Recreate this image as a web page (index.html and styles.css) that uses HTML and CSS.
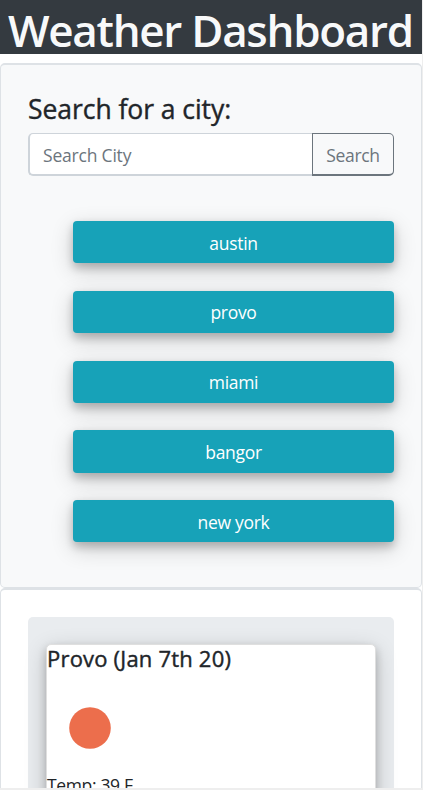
FILE: index.html
```html
<!DOCTYPE html>
<html lang="en">
<head>
<meta charset="utf-8">
<title>Weather Dashboard</title>
<link rel="stylesheet" href="styles.css">
</head>
<body>
<div class="page">
  <header class="banner"><h1>Weather Dashboard</h1></header>
  <section class="panel search">
    <h2>Search for a city:</h2>
    <form class="input-group">
      <input type="text" placeholder="Search City" aria-label="City">
      <button type="button" class="search-btn">Search</button>
    </form>
    <div class="cities">
      <button class="city">austin</button>
      <button class="city">provo</button>
      <button class="city">miami</button>
      <button class="city">bangor</button>
      <button class="city">new york</button>
    </div>
  </section>
  <section class="panel results">
    <div class="current">
      <article class="card">
        <h3>Provo (Jan 7th 20)</h3>
        <svg class="sun" width="44" height="44" viewBox="0 0 44 44" aria-hidden="true"><circle cx="22" cy="22" r="20.8" fill="#ec6e4c"/></svg>
        <p>Temp: 39 F</p>
      </article>
    </div>
  </section>
</div>
</body>
</html>
```
FILE: styles.css
```css
* { box-sizing: border-box; }
body {
  margin: 0;
  height: 790px;
  overflow: hidden;
  background: #eee;
  color: #212529;
  font-family: "Open Sans", "Noto Sans", sans-serif;
}
h1, h2, h3, p { margin: 0; white-space: nowrap; }
.page {
  width: 422px;
  height: 788px;
  overflow: hidden;
  background: #fff;
}
.banner {
  height: 54px;
  margin-bottom: 9px;
  background: #343a40;
  color: #f8f9fa;
}
.banner h1 {
  padding: 3px 0 0 8px;
  font-size: 44px;
  font-weight: 600;
  line-height: 54px;
  letter-spacing: -1.3px;
}
.panel {
  border: 1px solid #dee2e6;
  border-top-width: 2px;
  border-radius: 5px;
}
.search {
  height: 525px;
  padding: 26px 27px 0;
  background: #f8f9fa;
}
.search h2 {
  height: 42px;
  font-size: 26.5px;
  font-weight: 500;
  line-height: 37px;
  letter-spacing: -0.05px;
  -webkit-text-stroke: 0.4px currentColor;
}
.input-group { display: flex; height: 43px; }
.input-group input {
  width: 284px;
  padding: 1px 13px 0 13px;
  border: solid #ced4da;
  border-width: 1px 0 2px 2px;
  border-radius: 5px 0 0 5px;
  background: #fff;
  font: 17.5px "Open Sans", "Noto Sans", sans-serif;
  letter-spacing: -0.2px;
}
.input-group input::placeholder { color: #6c757d; opacity: 1; }
.search-btn {
  flex: 1;
  padding: 2px 0 0;
  border: solid #6c757d;
  border-width: 1px 1px 2px;
  border-radius: 0 5px 5px 0;
  background: transparent;
  color: #6c757d;
  font: 17.5px "Open Sans", "Noto Sans", sans-serif;
  letter-spacing: -0.3px;
}
.cities {
  display: flex;
  flex-direction: column;
  gap: 27.5px;
  padding: 45px 0 0 45px;
}
.city {
  height: 42.3px;
  padding: 1px 0 0;
  border: 0;
  border-radius: 4px;
  background: #17a2b8;
  color: #fff;
  font: 17.5px "Open Sans", "Noto Sans", sans-serif;
  letter-spacing: -0.3px;
}
.city, .card {
  box-shadow: 0 4.5px 9px rgba(0, 0, 0, .2), 0 6.8px 22.6px rgba(0, 0, 0, .19);
}
.results { height: 300px; padding: 27px 27px 0; }
.current {
  height: 300px;
  padding: 27px 18px 0;
  border-radius: 5px;
  background: #e9ecef;
}
.card {
  height: 300px;
  border: 1px solid #dfdfdf;
  border-radius: 5px;
  background: #fff;
}
.card h3 {
  height: 28px;
  font-size: 22px;
  font-weight: 500;
  line-height: 27px;
  letter-spacing: 0.2px;
  -webkit-text-stroke: 0.4px currentColor;
}
.sun { display: block; margin: 33px 0 0 21px; }
.card p {
  margin-top: 22px;
  font-size: 17.5px;
  line-height: 26px;
  letter-spacing: -0.35px;
}
```
